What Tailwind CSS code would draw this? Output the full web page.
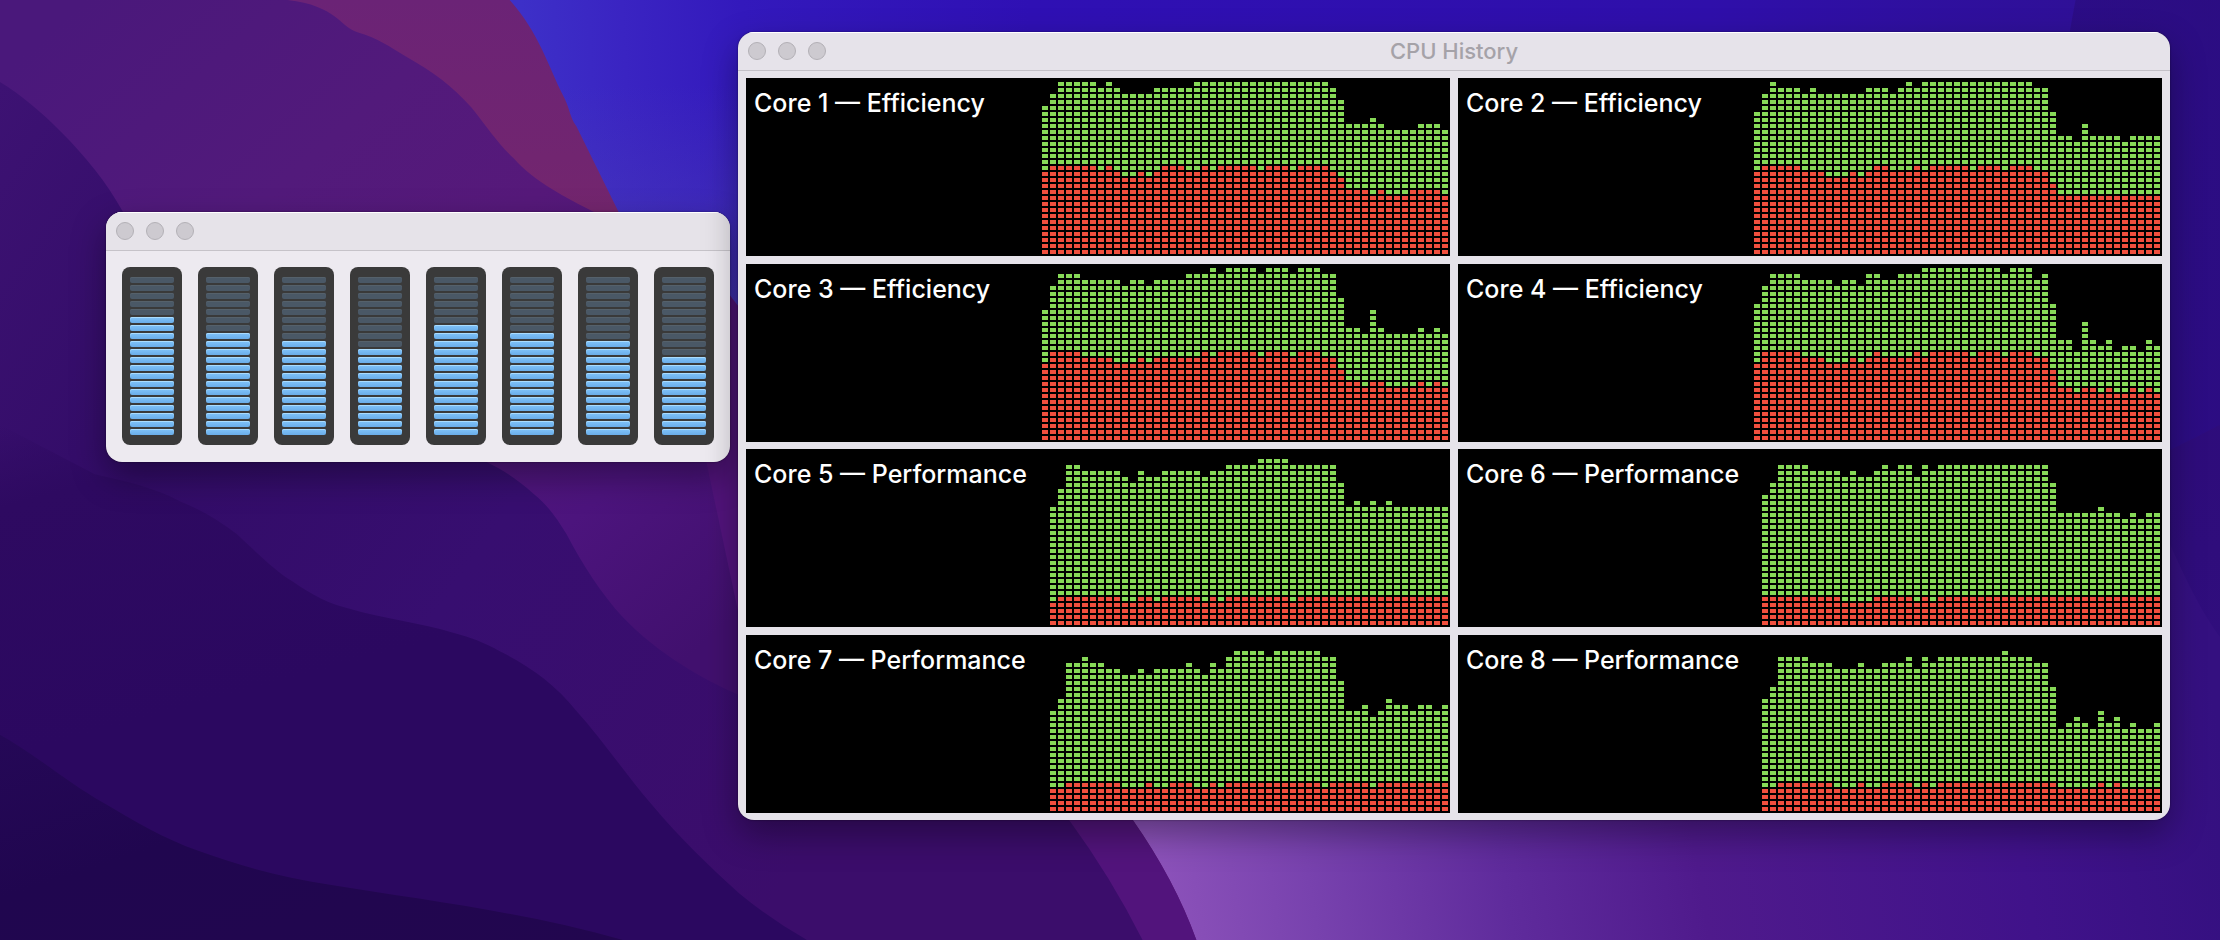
<!DOCTYPE html>
<html lang="en">
<head>
<meta charset="utf-8">
<title>CPU History</title>
<script src="https://cdn.jsdelivr.net/npm/@tailwindcss/browser@4"></script>
</head>
<body class="font-[Inter,'Liberation_Sans',sans-serif]">
<main class="relative min-h-screen w-full overflow-hidden bg-[#2d0b66]">
  <!-- Wallpaper -->
  <svg class="absolute inset-0 h-full w-full" viewBox="0 0 1568 664" preserveAspectRatio="none" aria-hidden="true">
    <defs>
      <linearGradient id="blue" gradientUnits="userSpaceOnUse" x1="370" y1="60" x2="1568" y2="0"><stop offset="0" stop-color="#3d30c8"/><stop offset=".06" stop-color="#3a24c2"/><stop offset=".13" stop-color="#3319bc"/><stop offset=".3" stop-color="#2f10b4"/><stop offset=".7" stop-color="#2f0faa"/><stop offset="1" stop-color="#2f1090"/></linearGradient>
      <linearGradient id="haze" gradientUnits="userSpaceOnUse" x1="0" y1="60" x2="0" y2="216"><stop offset="0" stop-color="#4a3cb4" stop-opacity="0"/><stop offset="1" stop-color="#4a3cb4" stop-opacity=".7"/></linearGradient>
      <linearGradient id="side" gradientUnits="userSpaceOnUse" x1="0" y1="0" x2="0" y2="664"><stop offset="0" stop-color="#290b7a"/><stop offset=".5" stop-color="#2a0a78"/><stop offset="1" stop-color="#2a0a78" stop-opacity="0"/></linearGradient>
      <linearGradient id="ridge" x1="0" y1="0" x2="0" y2="1"><stop offset="0" stop-color="#6b2376"/><stop offset=".25" stop-color="#74266d"/><stop offset="1" stop-color="#5c1a72"/></linearGradient>
      <linearGradient id="plum" gradientUnits="userSpaceOnUse" x1="60" y1="0" x2="480" y2="470"><stop offset="0" stop-color="#4a187b"/><stop offset=".3" stop-color="#521a7b"/><stop offset=".5" stop-color="#56197a"/><stop offset=".8" stop-color="#4c147d"/><stop offset="1" stop-color="#41106e"/></linearGradient>
      <linearGradient id="dusk" gradientUnits="userSpaceOnUse" x1="0" y1="60" x2="640" y2="500"><stop offset="0" stop-color="#3d1273"/><stop offset=".3" stop-color="#320c67"/><stop offset=".6" stop-color="#370e70"/><stop offset="1" stop-color="#3b0d6b"/></linearGradient>
      <linearGradient id="deep" gradientUnits="userSpaceOnUse" x1="0" y1="300" x2="60" y2="520"><stop offset="0" stop-color="#2e0a61" stop-opacity="0"/><stop offset=".25" stop-color="#2e0a61"/><stop offset="1" stop-color="#2b0860"/></linearGradient>
      <linearGradient id="night" x1="0" y1="0" x2="1" y2="1"><stop offset="0" stop-color="#250857"/><stop offset=".4" stop-color="#20064f"/><stop offset="1" stop-color="#22064f"/></linearGradient>
      <linearGradient id="glow" gradientUnits="userSpaceOnUse" x1="820" y1="640" x2="1568" y2="520"><stop offset="0" stop-color="#8c52ba"/><stop offset=".14" stop-color="#7842ae"/><stop offset=".32" stop-color="#5f2b9c"/><stop offset=".5" stop-color="#4f1a8c"/><stop offset=".8" stop-color="#40128a"/><stop offset="1" stop-color="#341080"/></linearGradient>
    </defs>
    <rect width="1568" height="664" fill="url(#blue)"/>
    <rect x="360" y="60" width="180" height="170" fill="url(#haze)"/>
    <path d="M740 480C1000 470 1300 440 1568 300V664H740Z" fill="url(#glow)"/>
    <path d="M1466 0Q1456 50 1450 120C1480 250 1530 400 1568 450V0Z" fill="url(#side)" opacity=".6"/>
    <path d="M0 0H360C380 22 388 48 397 66C403 77 402 82 407 89L437 150L515 208L800 579Q830 622 845 664H0Z" fill="url(#ridge)"/>
    <path d="M515 208L800 579Q830 622 845 664H700L400 330V212Z" fill="#52147c"/>
    <path d="M0 0H203C238 4 240 19 253 23C267 27 275 33 287 40C305 50 320 61 333 76C345 91 352 102 363 112C377 128 400 140 420 150L470 190L540 520H0Z" fill="url(#plum)"/>
    <path d="M0 58C15 67 30 80 43 93C60 110 75 128 87 150L200 300L343 326C357 333 366 339 377 349C388 358 393 366 400 377C411 398 425 420 440 436C465 462 495 479 522 491L700 500L755 579Q785 620 807 664H0Z" fill="url(#dusk)"/>
    <path d="M0 300L67 335C90 340 110 345 127 354C142 360 155 368 167 377C181 390 194 403 207 411C220 420 233 427 247 430C270 437 298 440 320 447C332 450 342 454 353 460C373 470 392 483 407 502C425 522 442 547 460 568C480 592 501 612 522 631Q545 650 570 664H0Z" fill="url(#deep)"/>
    <path d="M0 519C25 533 48 553 73 567C95 580 115 592 140 601C170 612 200 620 233 625C300 636 370 644 440 664H0Z" fill="url(#night)"/>
  </svg>

  <!-- CPU usage window -->
  <section aria-label="CPU Usage" class="absolute left-[106px] top-[212px] overflow-hidden rounded-2xl bg-[#edeaf0] shadow-[0_14px_34px_rgba(0,0,0,0.35),0_0_2px_rgba(0,0,0,0.5)]">
    <header class="flex h-[39px] items-center gap-3 border-b border-[#c6c3c9] bg-[#e6e3e9] px-[10px] shadow-[inset_0_1px_0_#fff]">
      <button aria-label="Close" class="size-[18px] rounded-full border border-[#b3b0b6] bg-[#cdcad0]"></button>
      <button aria-label="Minimize" class="size-[18px] rounded-full border border-[#b3b0b6] bg-[#cdcad0]"></button>
      <button aria-label="Zoom" class="size-[18px] rounded-full border border-[#b3b0b6] bg-[#cdcad0]"></button>
    </header>
    <div id="meters" class="flex gap-4 px-4 pt-4 pb-[17px]"></div>
  </section>

  <!-- CPU history window -->
  <section aria-label="CPU History" class="absolute left-[738px] right-[50px] top-8 overflow-hidden rounded-2xl bg-[#e6e3ea] shadow-[0_14px_34px_rgba(0,0,0,0.35),0_0_2px_rgba(0,0,0,0.5)]">
    <header class="grid h-[39px] grid-cols-[1fr_auto_1fr] items-center border-b border-[#c3c0c7] px-[10px] shadow-[inset_0_1px_0_#fff]">
      <div class="flex gap-3">
        <button aria-label="Close" class="size-[18px] rounded-full border border-[#b3b0b6] bg-[#cdcad0]"></button>
        <button aria-label="Minimize" class="size-[18px] rounded-full border border-[#b3b0b6] bg-[#cdcad0]"></button>
        <button aria-label="Zoom" class="size-[18px] rounded-full border border-[#b3b0b6] bg-[#cdcad0]"></button>
      </div>
      <h1 class="text-[22px] leading-7 font-medium text-[#a5a2a8]">CPU History</h1>
    </header>
    <div id="cores" class="grid grid-cols-2 grid-rows-[186px_185px_186px_178px] items-start gap-x-2 px-2 py-[7px]"></div>
  </section>
</main>

<script>
// Lit segments (of 20) per core
const levels = [15, 13, 12, 11, 14, 13, 12, 10];
document.getElementById('meters').innerHTML = levels.map((lit, i) => {
  let segments = '';
  for (let s = 20; s > 0; s--) {
    segments += s <= lit
      ? '<span class="h-[6px] rounded-[2px] bg-linear-to-b from-[#80c3fa] to-[#6aade9] shadow-[inset_0_1px_0_#a9dcff]"></span>'
      : '<span class="h-[6px] rounded-[2px] bg-[#4a5866] shadow-[inset_0_1px_0_#55616b]"></span>';
  }
  return `<div role="meter" aria-label="Core ${i + 1}" aria-valuemin="0" aria-valuemax="20" aria-valuenow="${lit}" class="flex w-[60px] flex-col gap-[2px] rounded-lg bg-[#3a3a3a] px-2 py-[10px]">${segments}</div>`;
}).join('');

// History series, run-length encoded: "value*count"; the last sample sits at the right edge.
const cores = [
  ['Core 1 — Efficiency',
   '25 27 29*5 28 29 28 27*4 28*5 29*17 28 26 22*3 23 22 21*4 22*3 21',
   '14 15*6 14 15 14 13*2 14 13 14 15*3 14*2 15 14 15*5 14 15*3 14 15*4 14 13 11*3 10 11 10*3 11*4 10'],
  ['Core 2 — Efficiency',
   '24 27 29 28*3 27 28 27*6 28*3 27 28 29 28 29*14 28*2 24 20*2 19 22 20*4 19 20*4',
   '14 15*5 14*3 13*3 14 13 14 15*2 14*3 15 14 15*5 14 15*3 14 15*3 14*2 12 10*13'],
  ['Core 3 — Efficiency',
   '22 26 28*3 27*5 26 27*2 26 27*4 28*3 29 28 29*4 28 29*3 28 29*3 28*2 24 19*2 18 22 19 18*4 19 18 19 18',
   '13 15*4 14*4 13*3 14 13 14*6 15 14 15*5 14 15*3 14 15*3 14*2 12 10*2 9 10*2 9*4 10 9 10 9'],
  ['Core 4 — Efficiency',
   '23 26 28*4 27*4 26 27*2 26 28*2 27*2 28*3 29*10 28 29*3 27 28 23 17*2 15 20 17 16 17 15 16*2 15 17 16',
   '13 15*5 14*3 13*3 14 13 14 15 14*4 15 14 15*5 14 15*3 14 15*3 14*2 12 9*2 8 9*2 8 9 8*2 9 8 9 8'],
  ['Core 5 — Performance',
   '20 23 27*2 26*5 25 24 26 25*2 26*5 25 26*2 27*4 28*4 27*6 24 20 21 20 21 20 21 20*7',
   '4 5*8 4*2 5*2 4 5*5 4 5 4 5*8 4 5*19'],
  ['Core 6 — Performance',
   '22 24 27*4 26*4 25 26 25*2 26 27 26 27*2 25 27 26 27*14 24 19*5 20 19*2 18 19 18 19*2',
   '5*10 4*4 5*5 4 5 4 5*28'],
  ['Core 7 — Performance',
   '17 19 25*2 26 25*2 24*2 23*2 24 23 24*4 25 24 23 25 24 26 27*4 26 27*6 26*2 22 17*2 18 16 17 19 18*2 17 18*2 17 18',
   '4*2 5*7 4*3 5 4*2 5*3 4*2 5 4 5*12 4 5*5 4 5*9'],
  ['Core 8 — Performance',
   '19 21 26*4 25*3 24*3 25 24*2 25*3 26 24 26 25 26*8 27 26*3 25*2 21 14 15 16 15 14 17 15 16 14 15 14*2 15',
   '4*2 5*7 4*3 5 4*2 5*4 4 5 4 5*15 4*5 5 4 5 4*5'],
];
const expand = runs => runs.split(' ').flatMap(run => {
  const [value, count = 1] = run.split('*').map(Number);
  return Array(count).fill(value);
});
document.getElementById('cores').innerHTML = cores.map(([name, total, system]) => {
  const totals = expand(total), systems = expand(system);
  let green = '', red = '';
  totals.forEach((height, i) => {
    const x = 408 - 8 * (totals.length - i);
    for (let row = 0; row < height; row++) {
      const cell = `M${x} ${172 - 6 * row}h6v4h-6z`;
      if (row < systems[i]) red += cell; else green += cell;
    }
  });
  return `<article class="flex h-[178px] items-start justify-between bg-black">
    <h2 class="pt-[10px] pl-2 text-[25px] leading-[30px] font-medium whitespace-nowrap text-white">${name}</h2>
    <svg class="h-[178px] w-[408px] shrink-0" viewBox="0 0 408 178" shape-rendering="crispEdges" role="img" aria-label="${name} load history"><path fill="#86d957" d="${green}"/><path fill="#f04f3e" d="${red}"/></svg>
  </article>`;
}).join('');
</script>
</body>
</html>
